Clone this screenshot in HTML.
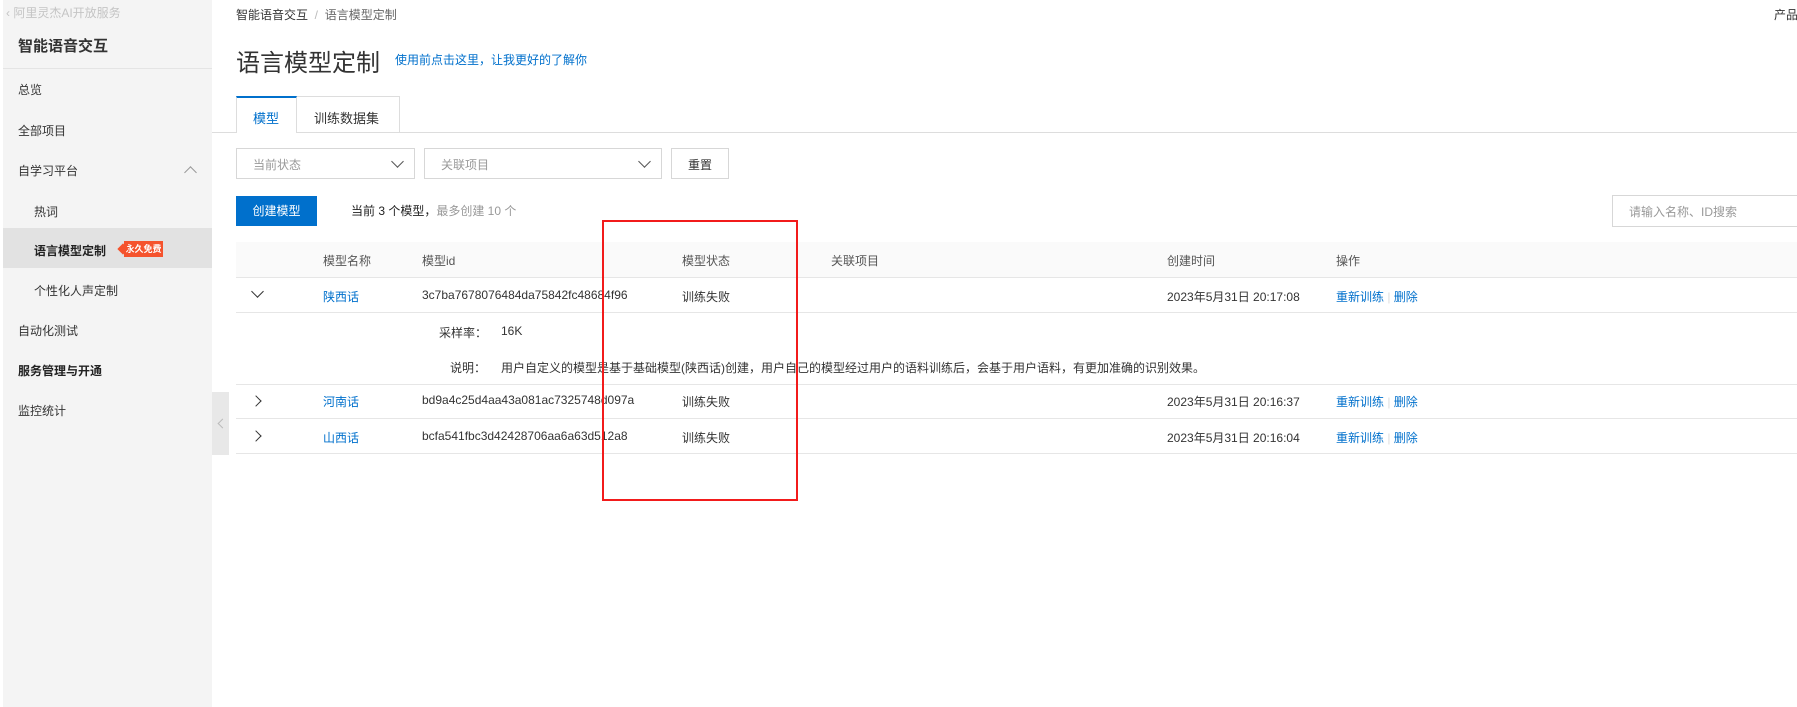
<!DOCTYPE html>
<html><head><meta charset="utf-8"><style>
*{margin:0;padding:0;box-sizing:border-box}
body{width:1797px;height:707px;overflow:hidden;background:#fff;font-family:"Liberation Sans","Noto Sans CJK SC",sans-serif;font-size:12px;color:#333;position:relative}
.a{position:absolute;white-space:nowrap}
.side{position:absolute;left:0;top:0;width:212px;height:707px;background:#f4f4f4;border-left:3px solid #fff}
.blue{color:#0070cc}
.th{color:#555}
.line{position:absolute;height:1px;background:#e6e6e6}
.sel{position:absolute;border:1px solid #d7d7d7;background:#fff;height:31px;top:148px}
.sel span{position:absolute;left:16px;top:7px;color:#999}
.chev{position:absolute;width:9px;height:9px;border-right:1.5px solid #555;border-bottom:1.5px solid #555;transform:rotate(45deg)}
.arrR{position:absolute;width:8px;height:8px;border-right:1.5px solid #333;border-bottom:1.5px solid #333;transform:rotate(-45deg)}
</style></head><body>
<div class="side"></div>
<div class="a" style="left:6px;top:4px;color:#c4c4c4;font-size:12px">&#8249; 阿里灵杰AI开放服务</div>
<div class="a" style="left:18px;top:35px;font-size:15px;font-weight:bold;color:#333">智能语音交互</div>
<div class="line" style="left:3px;top:68px;width:209px;background:#e4e4e4"></div>
<div class="a" style="left:18px;top:81px">总览</div>
<div class="a" style="left:18px;top:122px">全部项目</div>
<div class="a" style="left:18px;top:162px">自学习平台</div>
<div class="a" style="left:186px;top:168px;width:9px;height:9px;border-left:1.5px solid #999;border-top:1.5px solid #999;transform:rotate(45deg)"></div>
<div class="a" style="left:34px;top:203px">热词</div>
<div class="a" style="left:3px;top:228px;width:209px;height:40px;background:#e2e2e2"></div>
<div class="a" style="left:34px;top:242px;font-weight:bold;color:#222">语言模型定制</div>
<div class="a" style="left:124px;top:241px;width:39px;height:16px;background:#f5532d;color:#fff;font-size:9px;font-weight:bold;line-height:16px;text-align:center">永久免费</div>
<div class="a" style="left:119px;top:245px;width:8px;height:8px;background:#f5532d;transform:rotate(45deg)"></div>
<div class="a" style="left:34px;top:282px">个性化人声定制</div>
<div class="a" style="left:18px;top:322px">自动化测试</div>
<div class="a" style="left:18px;top:362px;font-weight:bold;color:#222">服务管理与开通</div>
<div class="a" style="left:18px;top:402px">监控统计</div>
<div class="a" style="left:212px;top:392px;width:17px;height:63px;background:#e8e8e8"></div>
<div class="a" style="left:219px;top:420px;width:7px;height:7px;border-left:1px solid #bbb;border-bottom:1px solid #bbb;transform:rotate(45deg)"></div>

<div class="a" style="left:236px;top:6px;color:#333">智能语音交互 <span style="color:#bbb">&nbsp;/&nbsp;</span> <span style="color:#666">语言模型定制</span></div>
<div class="a" style="left:1774px;top:6px">产品</div>
<div class="a" style="left:236px;top:43px;font-size:24px;color:#333">语言模型定制</div>
<div class="a blue" style="left:395px;top:51px">使用前点击这里，让我更好的了解你</div>

<div class="line" style="left:212px;top:132px;width:1585px;background:#ddd"></div>
<div class="a" style="left:236px;top:96px;width:61px;height:37px;border:1px solid #ddd;border-top:2px solid #0070cc;border-bottom:none;background:#fff"></div>
<div class="a blue" style="left:253px;top:108px;font-size:13px">模型</div>
<div class="a" style="left:297px;top:96px;width:103px;height:37px;border:1px solid #ddd;border-left:none;border-bottom:none"></div>
<div class="a" style="left:314px;top:108px;font-size:13px">训练数据集</div>

<div class="sel" style="left:236px;width:179px"><span>当前状态</span><div class="chev" style="right:12px;top:8px"></div></div>
<div class="sel" style="left:424px;width:238px"><span>关联项目</span><div class="chev" style="right:12px;top:8px"></div></div>
<div class="sel" style="left:671px;width:58px"><span style="color:#333;left:16px">重置</span></div>

<div class="a" style="left:236px;top:196px;width:81px;height:30px;background:#0070cc;color:#fff;text-align:center;line-height:30px">创建模型</div>
<div class="a" style="left:351px;top:202px;color:#222">当前 3 个模型，<span style="color:#999">最多创建 10 个</span></div>
<div class="a" style="left:1612px;top:195px;width:190px;height:32px;border:1px solid #d7d7d7"></div>
<div class="a" style="left:1629px;top:203px;color:#999">请输入名称、ID搜索</div>

<div class="a" style="left:236px;top:242px;width:1561px;height:35px;background:#fafafa"></div>
<div class="line" style="left:236px;top:277px;width:1561px"></div>
<div class="a th" style="left:323px;top:252px">模型名称</div>
<div class="a th" style="left:422px;top:252px">模型id</div>
<div class="a th" style="left:682px;top:252px">模型状态</div>
<div class="a th" style="left:831px;top:252px">关联项目</div>
<div class="a th" style="left:1167px;top:252px">创建时间</div>
<div class="a th" style="left:1336px;top:252px">操作</div>

<div class="a" style="left:253px;top:287px;width:9px;height:9px;border-right:1.5px solid #333;border-bottom:1.5px solid #333;transform:rotate(45deg)"></div>
<div class="a blue" style="left:323px;top:288px">陕西话</div>
<div class="a" style="left:422px;top:288px">3c7ba7678076484da75842fc48684f96</div>
<div class="a" style="left:682px;top:288px">训练失败</div>
<div class="a" style="left:1167px;top:288px">2023年5月31日 20:17:08</div>
<div class="a blue" style="left:1336px;top:288px">重新训练 <span style="color:#ddd">|</span> 删除</div>
<div class="line" style="left:236px;top:312px;width:1561px"></div>
<div class="a" style="left:439px;top:324px">采样率：</div>
<div class="a" style="left:501px;top:324px">16K</div>
<div class="a" style="left:450px;top:359px">说明：</div>
<div class="a" style="left:501px;top:359px">用户自定义的模型是基于基础模型(陕西话)创建，用户自己的模型经过用户的语料训练后，会基于用户语料，有更加准确的识别效果。</div>
<div class="line" style="left:236px;top:384px;width:1561px"></div>

<div class="arrR" style="left:252px;top:397px"></div>
<div class="a blue" style="left:323px;top:393px">河南话</div>
<div class="a" style="left:422px;top:393px">bd9a4c25d4aa43a081ac7325748d097a</div>
<div class="a" style="left:682px;top:393px">训练失败</div>
<div class="a" style="left:1167px;top:393px">2023年5月31日 20:16:37</div>
<div class="a blue" style="left:1336px;top:393px">重新训练 <span style="color:#ddd">|</span> 删除</div>
<div class="line" style="left:236px;top:418px;width:1561px"></div>

<div class="arrR" style="left:252px;top:432px"></div>
<div class="a blue" style="left:323px;top:429px">山西话</div>
<div class="a" style="left:422px;top:429px">bcfa541fbc3d42428706aa6a63d512a8</div>
<div class="a" style="left:682px;top:429px">训练失败</div>
<div class="a" style="left:1167px;top:429px">2023年5月31日 20:16:04</div>
<div class="a blue" style="left:1336px;top:429px">重新训练 <span style="color:#ddd">|</span> 删除</div>
<div class="line" style="left:236px;top:453px;width:1561px"></div>

<div class="a" style="left:602px;top:220px;width:196px;height:281px;border:2px solid #f21b1b"></div>
</body></html>
